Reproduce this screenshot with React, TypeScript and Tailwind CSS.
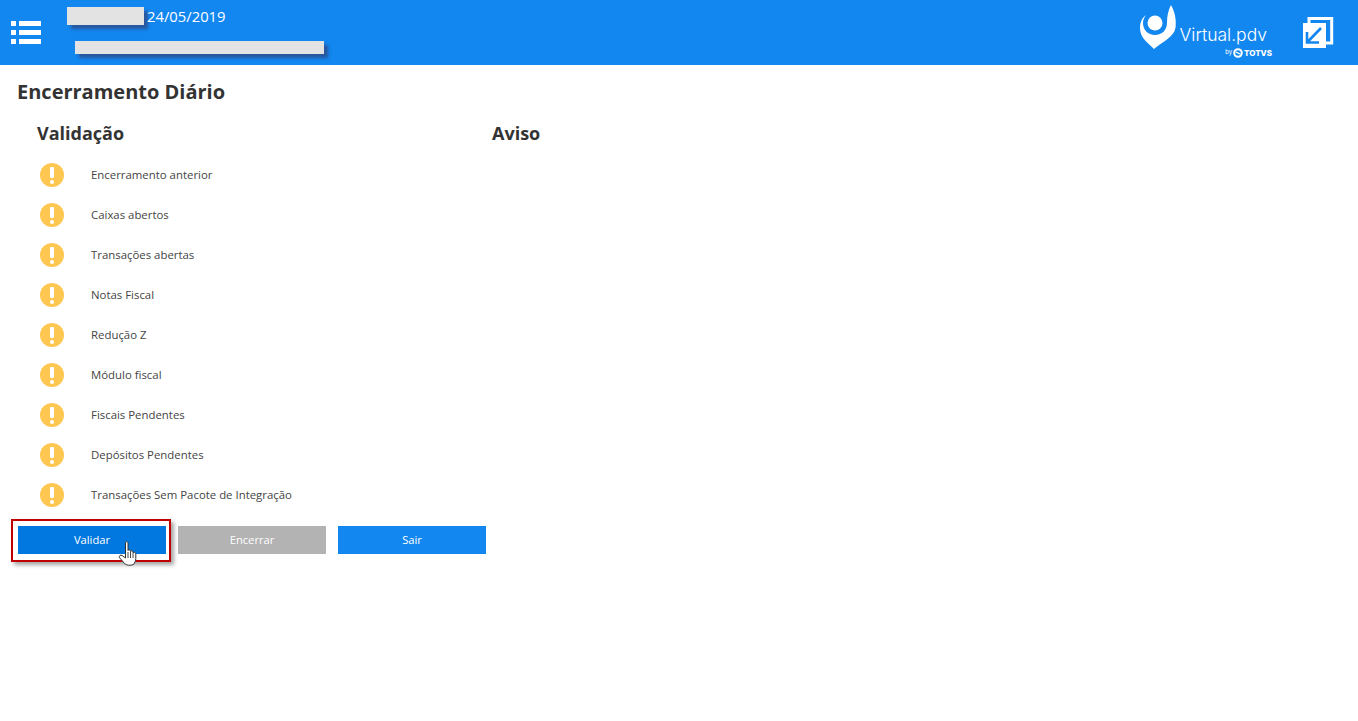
const validationItems = [
  "Encerramento anterior",
  "Caixas abertos",
  "Transações abertas",
  "Notas Fiscal",
  "Redução Z",
  "Módulo fiscal",
  "Fiscais Pendentes",
  "Depósitos Pendentes",
  "Transações Sem Pacote de Integração",
];

const MenuIcon = () => ( // list icon, three bullets and three bars
  <svg width="30" height="24" viewBox="0 0 30 24" fill="#fff">
    <rect x="0" y="1" width="5" height="5" />
    <rect x="8" y="1" width="22" height="5" />
    <rect x="0" y="10" width="5" height="5" />
    <rect x="8" y="10" width="22" height="5" />
    <rect x="0" y="19" width="5" height="5" />
    <rect x="8" y="19" width="22" height="5" />
  </svg>
);

const LogoMark = () => ( // solid disc held by a swoosh that ends in a drop
  <svg className="mr-[2px]" width="40" height="52" viewBox="0 0 40 52" fill="#fff">
    <path d="M33 5C37 12 38.5 20 37.5 28C36 37 24 42 16 49C10 43 2 38 2 28C2 22 4 18 8 15C5.5 18.5 5 21 5 23C5 30 10 35 17 35C24 35 29 30 29 23C29 16 30 11 33 5Z" />
    <circle cx="17" cy="23" r="7.5" />
  </svg>
);

const TotvsMark = () => (
  <svg width="10" height="10" viewBox="0 0 10 10" fill="none" stroke="#fff" strokeWidth="2">
    <circle cx="5" cy="5" r="3.8" />
    <path d="M2.5 4.2C4 3.6 6 6.4 7.5 5.8" strokeWidth="1.3" />
  </svg>
);

const ExitIcon = () => ( // white square in front of an outlined one, arrow to the lower left
  <svg width="32" height="32" viewBox="0 0 32 32" fill="none">
    <path d="M7 6V1.5H29.7V26H24" stroke="#fff" strokeWidth="3" />
    <rect x="1" y="6" width="23" height="25" fill="#fff" />
    <path d="M19 11L5.5 25M5 15V25.5H17" stroke="#1287f0" strokeWidth="2.6" />
  </svg>
);

const WarningIcon = () => (
  <span className="flex h-6 w-6 flex-col items-center justify-center rounded-full bg-[#fdc752]">
    <span className="h-[11px] w-[4px] rounded-[1px] bg-white" />
    <span className="mt-[2px] h-[4px] w-[4px] rounded-full bg-white" />
  </span>
);

const HandCursor = () => (
  <svg className="absolute left-[118px] top-[540px]" width="22" height="27" viewBox="0 0 22 27">
    <path d="M7.5 2.8C7.5 1.2 10 1.2 10 2.8V10.5C10.2 9.5 12.3 9.5 12.5 10.8V11.5C13 10.5 15 10.6 15 12V12.8C15.6 11.9 17.8 12.2 17.8 13.8V18.5C17.8 21 16.8 22.5 15.5 24.5C12.5 25.8 8.5 25.5 6.5 23.5C5 21.5 3 19.5 1.6 17.8C0.5 16 2.5 14.4 4.2 15.5L7.5 18Z" fill="#fff" stroke="#333" strokeWidth="1" strokeLinejoin="round" />
    <path d="M10 12V18M12.5 12V18M15 13V18" stroke="#333" strokeWidth="0.9" />
  </svg>
);

const App = () => {
  return (
    <div className="relative min-h-[721px] bg-white font-['Open_Sans','Noto_Sans',sans-serif] text-[#333]">
      <header className="flex h-[65px] justify-between bg-[#1287f0] text-white">
        <div className="flex h-full items-center">
          <div className="ml-[11px] mt-[-1px]"><MenuIcon /></div>
          <div className="ml-[26px] flex h-full flex-col">
            <div className="mt-[7px] flex items-start">
              <span className="h-[18px] w-[77px] bg-[#e3e3e3] shadow-[4px_4px_3px_rgba(50,70,130,0.75)]" />
              <span className="ml-[3px] text-[14.8px] leading-[18px] ">24/05/2019</span>
            </div>
            <span className="ml-[8px] mt-[16px] h-[13px] w-[249px] bg-[#e3e3e3] shadow-[4px_4px_3px_rgba(50,70,130,0.75)]" />
          </div>
        </div>
        <div className="flex h-full items-start">
          <LogoMark />
          <div className="mt-[23px] flex flex-col items-end">
            <span className="mr-[5px] font-['Inter',sans-serif] text-[17.5px] font-light leading-[24px]">Virtual.pdv</span>
            <span className="mt-[1px] flex items-center font-['Inter',sans-serif] text-[8px] font-extrabold leading-[10px]">
              <span className="mr-[1px] mt-[-3px] text-[6px] font-normal">by</span>
              <span className="mr-[1px]"><TotvsMark /></span>
              TOTVS
            </span>
          </div>
          <div className="ml-[30px] mr-[24px] mt-[17px]"><ExitIcon /></div>
        </div>
      </header>

      <main className="pl-[17px]">
        <h1 className="mt-[13px] text-[20px] font-bold leading-[28px]">Encerramento Diário</h1>
        <div className="mt-[14px] flex">
          <section className="w-[475px] pl-[20px]">
            <h2 className="text-[18px] font-bold leading-[26px]">Validação</h2>
          </section>
          <section>
            <h2 className="text-[18px] font-bold leading-[26px]">Aviso</h2>
          </section>
        </div>
        <ul className="mt-[9px] pl-[23px]">
          {validationItems.map(item => (
            <li key={item} className="flex h-[40px] items-center">
              <WarningIcon />
              <span className="ml-[27px] text-[11.4px] leading-[18px] text-[#444]">{item}</span>
            </li>
          ))}
        </ul>
        <div className="ml-[1px] mt-[11px] flex gap-[12px] text-[11.2px] text-white">
          <button type="button" className="h-[28px] w-[148px] bg-[#0078df]">Validar</button>
          <button type="button" className="h-[28px] w-[148px] bg-[#b3b3b3]">Encerrar</button>
          <button type="button" className="h-[28px] w-[148px] bg-[#1287f0]">Sair</button>
        </div>
      </main>
      {/* red annotation drawn over the page around Validar */}
      <div className="pointer-events-none absolute left-[11px] top-[519px] h-[43px] w-[160px] border-[2.5px] border-[#c00000] shadow-[3px_3px_4px_rgba(0,0,0,0.35)]" />
      <HandCursor />
    </div>
  );
};

export default App;
